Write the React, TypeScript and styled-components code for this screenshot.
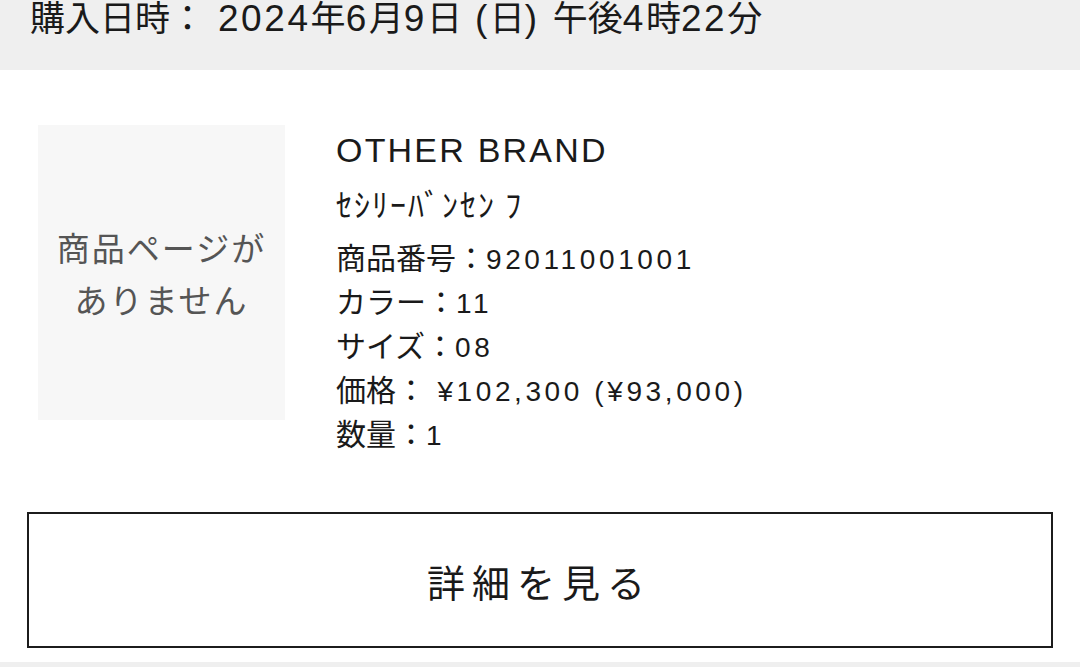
import React from 'react';
import styled, { createGlobalStyle } from 'styled-components';

const GlobalStyle = createGlobalStyle`
  html, body {
    margin: 0;
    padding: 0;
    background: #ffffff;
    font-family: 'Noto Sans CJK JP', sans-serif;
    color: #1a1a1a;
  }
`;

const Page = styled.div`
  width: 1080px;
  height: 667px;
  overflow: hidden;
  display: flex;
  flex-direction: column;
  background: #efefef;
`;

const DateBar = styled.div`
  flex-shrink: 0;
  height: 70px;
  padding-left: 30px;
  background: #efefef;
  font-size: 35px;
  line-height: 30px;
  color: #1a1a1a;
  white-space: nowrap;
`;

// Latin runs are set a little wider than the CJK glyphs around them
const Lat = styled.span<{ $size: number; $track: number }>`
  font-family: 'Liberation Sans', Arial, sans-serif;
  font-size: ${p => p.$size}px;
  letter-spacing: ${p => p.$track}px;
  line-height: 1;
`;

const Card = styled.div`
  flex-shrink: 0;
  background: #ffffff;
  padding: 55px 27px 14px;
  display: flex;
  flex-direction: column;
`;

const ItemRow = styled.div`
  display: flex;
  gap: 51px;
  padding-left: 11px;
`;

const Thumb = styled.div`
  width: 247px;
  height: 295px;
  flex-shrink: 0;
  background: #f7f7f7;
  display: flex;
  align-items: center;
  justify-content: center;
  text-align: center;
  font-size: 33px;
  letter-spacing: 2px;
  line-height: 52px;
  color: #555555;
`;

const Info = styled.div`
  display: flex;
  flex-direction: column;
  padding-top: 5px;
`;

const Brand = styled.div`
  font-family: 'Liberation Sans', Arial, sans-serif;
  font-size: 34px;
  letter-spacing: 2.2px;
  line-height: 40px;
  color: #1a1a1a;
`;

const Name = styled.div`
  margin-top: 13px;
  margin-bottom: 11px;
  font-size: 32px;
  letter-spacing: 2px;
  line-height: 40px;
  color: #1a1a1a;
`;

const Detail = styled.div`
  font-size: 30px;
  line-height: 44px;
  color: #1a1a1a;
  white-space: nowrap;
`;

const DetailButton = styled.button`
  margin-top: 58px;
  height: 136px;
  width: 100%;
  background: #ffffff;
  border: 2.5px solid #1c1c1c;
  font-family: 'Noto Sans CJK JP', sans-serif;
  font-size: 38px;
  letter-spacing: 7px;
  padding-left: 5px;
  color: #1a1a1a;
  cursor: pointer;
`;

const latinRun = /^[\x20-\x7E¥]+$/;

function mixed(text: string, size: number, track: number) {
  return text.split(/([\x20-\x7E¥]+)/).map((part, i) =>
    latinRun.test(part) && part.trim() !== '' ? (
      <Lat key={i} $size={size} $track={track}>
        {part}
      </Lat>
    ) : (
      part
    )
  );
}

const details = [
  '商品番号：92011001001',
  'カラー：11',
  'サイズ：08',
  '価格： ¥102,300 (¥93,000)',
  '数量：1',
];

function App() {
  return (
    <>
      <GlobalStyle />
      <Page>
        <DateBar>{mixed('購入日時： 2024年6月9日 (日) 午後4時22分', 37, 2.6)}</DateBar>
        <Card>
          <ItemRow>
            <Thumb>
              商品ページが
              <br />
              ありません
            </Thumb>
            <Info>
              <Brand>OTHER BRAND</Brand>
              <Name>ｾｼﾘｰﾊﾞﾝｾﾝ ﾌ</Name>
              {details.map(d => (
                <Detail key={d}>{mixed(d, 28, 3.6)}</Detail>
              ))}
            </Info>
          </ItemRow>
          <DetailButton>詳細を見る</DetailButton>
        </Card>
      </Page>
    </>
  );
}

export default App;
